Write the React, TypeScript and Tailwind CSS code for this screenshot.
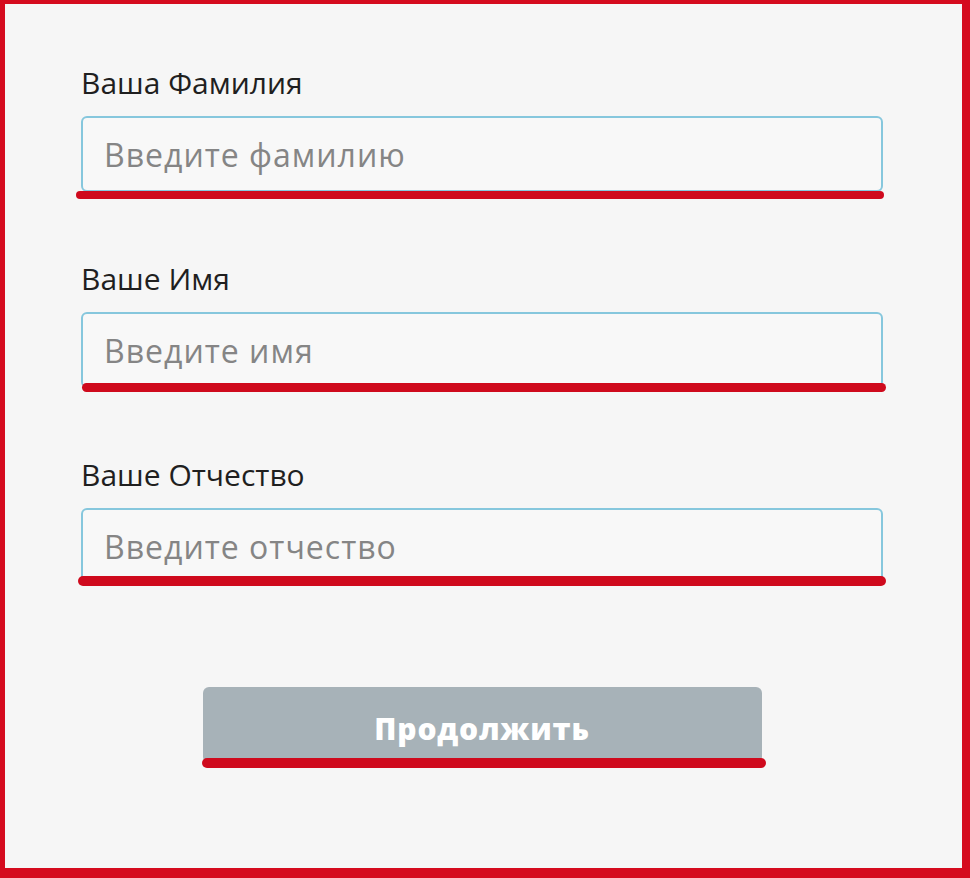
const fields = [
  { label: "Ваша Фамилия", placeholder: "Введите фамилию", mark: "left-[-5px] right-[-1px] top-[75px] h-[8px]" },
  { label: "Ваше Имя", placeholder: "Введите имя", mark: "left-[1px] right-[-3px] top-[71px] h-[9px]" },
  { label: "Ваше Отчество", placeholder: "Введите отчество", mark: "left-[-3px] right-[-3px] top-[68px] h-[10px]" },
];

export default function App() {
  return (
    <div className="h-[878px] w-[970px] border-t-[4px] border-l-[5px] border-r-[8px] border-b-[10px] border-[#d50b1e] bg-[#f6f6f6] font-['Open_Sans',sans-serif]">
      <div className="ml-[76px] mt-[59px] w-[802px]">
        <div className="flex flex-col gap-[67px]">
          {fields.map((f) => (
            <div key={f.label}>
              <p className="mb-[13px] text-[30px] leading-[40px] text-[#1f1f1f]">{f.label}</p>
              {/* input + red marker */}
              <div className="relative">
                <input
                  type="text"
                  placeholder={f.placeholder}
                  className="h-[76px] w-full rounded-[6px] border-2 border-[#86c7dd] bg-[#f8f8f8] pl-[21px] text-[32px] tracking-[1px] text-[#333] outline-none placeholder:text-[#858585]"
                />
                <div className={"absolute rounded-full bg-[#cf0a1d] " + f.mark} />
              </div>
            </div>
          ))}
        </div>

        {/* Continue */}
        <div className="mt-[103px] flex justify-center">
          <div className="relative w-[559px]">
            <button className="h-[76px] w-full rounded-[6px] bg-[#a7b2b8] pt-[6px] text-[30px] font-extrabold tracking-[0.8px] text-white">
              Продолжить
            </button>
            <div className="absolute left-[-1px] right-[-4px] top-[71px] h-[10px] rounded-full bg-[#cf0a1d]" />
          </div>
        </div>
      </div>
    </div>
  );
}
